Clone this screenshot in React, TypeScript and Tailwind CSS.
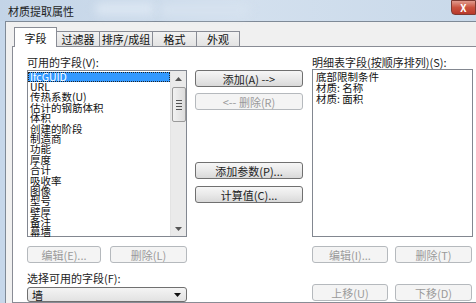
import React from "react";

const FONT = { fontFamily: '"Noto Sans CJK SC", "Noto Sans", sans-serif' };

function Btn({ label, w, disabled }: { label: string; w: string; disabled?: boolean }) {
  return (
    <div
      className={
        "h-[17px] flex items-center justify-center rounded-[3px] border text-[11px] leading-[12px] shrink-0 " +
        w +
        (disabled
          ? " border-[#b5b9bd] bg-[#f4f4f4] text-[#9a9a9a]"
          : " border-[#707070] bg-gradient-to-b from-[#f6f6f6] via-[#e9e9e9] to-[#d9d9d9] text-[#222]")
      }
    >
      {label}
    </div>
  );
}

const leftItems = [
  "IfcGUID",
  "URL",
  "传热系数(U)",
  "估计的钢筋体积",
  "体积",
  "创建的阶段",
  "制造商",
  "功能",
  "厚度",
  "合计",
  "吸收率",
  "图像",
  "型号",
  "壁厚",
  "备注",
  "幕墙",
];

const rightItems = ["底部限制条件", "材质: 名称", "材质: 面积"];

const tabs = [
  { t: "字段", w: "w-[43px]" },
  { t: "过滤器", w: "w-[43px]" },
  { t: "排序/成组", w: "w-[53px]" },
  { t: "格式", w: "w-[44px]" },
  { t: "外观", w: "w-[43px]" },
];

export default function App() {
  return (
    <div
      className="w-[476px] h-[303px] overflow-hidden flex flex-col bg-[#c6d7ea] text-[#111]"
      style={FONT}
    >
      {/* title bar */}
      <div className="h-[21px] shrink-0 relative flex items-center pl-[8px] bg-gradient-to-r from-[#c3d4e7] via-[#d3e0ee] to-[#c9d9ea]">
        <span className="text-[11px] leading-[12px] text-[#1b1b1b]">材质提取属性</span>
        <div className="absolute left-[95px] top-[3px] w-[60px] h-[12px] rounded-full bg-[#dbe6f2] blur-[4px]" />
        <div className="absolute left-[160px] top-[4px] w-[90px] h-[12px] rounded-full bg-[#d6e2ef] blur-[4px]" />
        <div className="absolute right-0 top-0 w-[25px] h-[15px] rounded-bl-[4px] border border-[#7d3a32] bg-gradient-to-b from-[#e09a8e] via-[#c9523f] to-[#b8382a] flex items-center justify-center text-white text-[10px] font-bold leading-none">
          X
        </div>
      </div>
      {/* body */}
      <div className="flex-1 flex pl-[5px] min-h-0">
        <div className="flex-1 flex flex-col bg-[#f0f0f0] border-l border-t border-[#7f8a97] pl-[6px] pt-[5px] min-h-0">
          {/* tabs */}
          <div className="h-[19px] flex items-end shrink-0 relative z-10">
            {tabs.map((tab, i) =>
              i === 0 ? (
                <div
                  key={tab.t}
                  className={
                    "h-[20px] -mb-px ml-[2px] border border-b-0 border-[#898c95] bg-white flex items-center justify-center text-[11px] leading-[12px] " +
                    tab.w
                  }
                >
                  {tab.t}
                </div>
              ) : (
                <div
                  key={tab.t}
                  className={
                    "h-[15px] border border-b-0 border-l-0 border-[#898c95] bg-gradient-to-b from-[#f2f2f2] to-[#e3e3e3] flex items-center justify-center text-[11px] leading-[12px] " +
                    tab.w
                  }
                >
                  {tab.t}
                </div>
              )
            )}
          </div>
          {/* panel */}
          <div className="flex-1 bg-white border border-r-0 border-[#898c95] pl-[14px] pt-[9px] flex min-h-0">
            {/* left column */}
            <div className="w-[160px] flex flex-col shrink-0">
              <div className="h-[12px] text-[11px] leading-[12px] text-[#222]">可用的字段(V):</div>
              <div className="mt-[2px] h-[167px] border border-[#828790] bg-white flex">
                <div className="flex-1 flex flex-col text-[10.5px] leading-[10.5px] pt-[1px]">
                  {leftItems.map((it, i) =>
                    i === 0 ? (
                      <div key={it} className="h-[10px] bg-[#3399ff] text-white pl-[2px] outline-1 outline-dotted outline-[#222] -outline-offset-1">
                        {it}
                      </div>
                    ) : (
                      <div key={it} className="h-[10.4px] pl-[2px] whitespace-nowrap">
                        {it}
                      </div>
                    )
                  )}
                </div>
                <div className="w-[16px] shrink-0 bg-[#eaeaea] border-l border-[#e3e3e3] flex flex-col items-center">
                  <div className="h-[16px] flex items-center justify-center">
                    <svg width="7" height="4" viewBox="0 0 7 4">
                      <path d="M0 4 L3.5 0 L7 4 Z" fill="#555" />
                    </svg>
                  </div>
                  <div className="w-[14px] h-[35px] rounded-[2px] border border-[#9a9a9a] bg-gradient-to-r from-[#f2f2f2] to-[#dcdcdc] flex flex-col items-center justify-center gap-[2px]">
                    <div className="w-[6px] h-[1px] bg-[#555]" />
                    <div className="w-[6px] h-[1px] bg-[#555]" />
                    <div className="w-[6px] h-[1px] bg-[#555]" />
                    <div className="w-[6px] h-[1px] bg-[#555]" />
                  </div>
                  <div className="flex-1" />
                  <div className="h-[14px] flex items-center justify-center">
                    <svg width="7" height="4" viewBox="0 0 7 4">
                      <path d="M0 0 L3.5 4 L7 0 Z" fill="#555" />
                    </svg>
                  </div>
                </div>
              </div>
              <div className="mt-[9px] flex justify-between">
                <Btn label="编辑(E)..." w="w-[74px]" disabled />
                <Btn label="删除(L)" w="w-[77px]" disabled />
              </div>
              <div className="mt-[9px] h-[12px] text-[11px] leading-[12px] text-[#222]">选择可用的字段(F):</div>
              <div className="mt-[3px] h-[18px] rounded-[3px] border border-[#707070] bg-gradient-to-b from-[#f4f4f4] to-[#e2e2e2] flex items-center pl-[4px] pr-[5px]">
                <span className="flex-1 text-[11px] leading-[12px]">墙</span>
                <svg width="7" height="4" viewBox="0 0 7 4">
                  <path d="M0 0 L3.5 4 L7 0 Z" fill="#111" />
                </svg>
              </div>
            </div>
            {/* middle column */}
            <div className="ml-[8px] w-[108px] flex flex-col shrink-0 pt-[14px]">
              <Btn label="添加(A) -->" w="w-[108px]" />
              <div className="mt-[6px]">
                <Btn label="<-- 删除(R)" w="w-[108px]" disabled />
              </div>
              <div className="mt-[52px]">
                <Btn label="添加参数(P)..." w="w-[108px]" />
              </div>
              <div className="mt-[7px]">
                <Btn label="计算值(C)..." w="w-[108px]" />
              </div>
            </div>
            {/* right column */}
            <div className="ml-[9px] w-[161px] flex flex-col shrink-0">
              <div className="h-[12px] text-[11px] leading-[12px] text-[#222] whitespace-nowrap">明细表字段(按顺序排列)(S):</div>
              <div className="mt-[1px] h-[168px] border border-[#828790] bg-white flex flex-col text-[10.5px] leading-[11px] pt-[1px] pl-[3px]">
                {rightItems.map((it) => (
                  <div key={it} className="h-[11px] whitespace-nowrap">
                    {it}
                  </div>
                ))}
              </div>
              <div className="mt-[9px] flex gap-[7px]">
                <Btn label="编辑(I)..." w="w-[76px]" disabled />
                <Btn label="删除(T)" w="w-[77px]" disabled />
              </div>
              <div className="mt-[21px] flex gap-[7px]">
                <Btn label="上移(U)" w="w-[76px]" disabled />
                <Btn label="下移(D)" w="w-[77px]" disabled />
              </div>
            </div>
          </div>
        </div>
      </div>
    </div>
  );
}
